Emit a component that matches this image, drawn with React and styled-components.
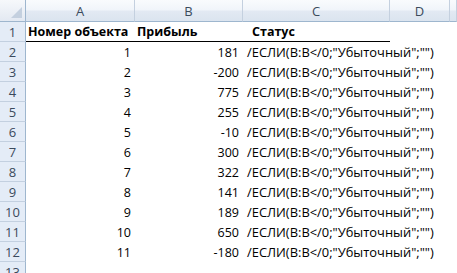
import styled, { createGlobalStyle } from "styled-components";

const GlobalStyle = createGlobalStyle`
  html, body {
    margin: 0;
    padding: 0;
    background: #ffffff;
  }
  body {
    font-family: "Open Sans", "Liberation Sans", sans-serif;
    overflow: hidden;
  }
`;

const columns = [
  { key: "A", width: 109 },
  { key: "B", width: 108 },
  { key: "C", width: 147 },
  { key: "D", width: 60 },
];

const rows = [
  [1, 181],
  [2, -200],
  [3, 775],
  [4, 255],
  [5, -10],
  [6, 300],
  [7, 322],
  [8, 141],
  [9, 189],
  [10, 650],
  [11, -180],
];

const formula = '/ЕСЛИ(B:B</0;"Убыточный";"")';

const Sheet = styled.div`
  display: grid;
  grid-template-columns: 26px ${columns.map((c) => `${c.width}px`).join(" ")} 1fr;
  grid-auto-rows: 20px;
  grid-template-rows: 22px;
  width: 457px;
  height: 273px;
  overflow: hidden;
  font-size: 12.5px;
  color: #000;
`;

const Corner = styled.div`
  position: relative;
  background: linear-gradient(#f6f8fb, #e3e9f2);
  border-right: 1px solid #9eb6ce;
  border-bottom: 1px solid #9eb6ce;

  &::after {
    content: "";
    position: absolute;
    right: 3px;
    bottom: 3px;
    width: 0;
    height: 0;
    border-left: 11px solid transparent;
    border-bottom: 11px solid #c4d0df;
  }
`;

const ColHead = styled.div`
  display: flex;
  align-items: center;
  justify-content: center;
  background: linear-gradient(#f9fbfd 0%, #f1f5fa 45%, #e2e9f3 55%, #dbe4ef 100%);
  border-right: 1px solid #c4d0df;
  border-bottom: 1px solid #9eb6ce;
  color: #3b4a5c;
  font-size: 13px;
`;

const RowHead = styled.div`
  display: flex;
  align-items: center;
  justify-content: center;
  background: #e4ecf7;
  border-right: 1px solid #9eb6ce;
  border-bottom: 1px solid #c3d0e0;
  color: #3b4a5c;
  font-size: 13px;
  padding-top: 1px;
  box-sizing: border-box;
`;

const Cell = styled.div`
  display: flex;
  align-items: center;
  justify-content: ${(p) => (p.$right ? "flex-end" : "flex-start")};
  padding: 0 ${(p) => (p.$right ? "4px" : "0")} 0 ${(p) => p.$indent || 2}px;
  font-weight: ${(p) => (p.$bold ? 700 : 400)};
  font-size: ${(p) => (p.$wide ? "12.9px" : "inherit")};
  border-bottom: ${(p) => (p.$underline ? "1px solid #000" : "none")};
  white-space: nowrap;
  overflow: visible;
  box-sizing: border-box;
  min-width: 0;
`;

export default function App() {
  return (
    <>
      <GlobalStyle />
      <Sheet>
        <Corner />
        {columns.map((c) => (
          <ColHead key={c.key}>{c.key}</ColHead>
        ))}
        <ColHead />

        <RowHead>1</RowHead>
        <Cell $bold $underline>Номер объекта</Cell>
        <Cell $bold $underline>Прибыль</Cell>
        <Cell $bold $underline $indent={9}>Статус</Cell>
        <Cell />
        <Cell />

        {rows.map(([n, profit], i) => (
          <RowLine key={n} index={i + 2} n={n} profit={profit} />
        ))}

        <RowHead>13</RowHead>
        <Cell />
        <Cell />
        <Cell />
        <Cell />
        <Cell />
      </Sheet>
    </>
  );
}

function RowLine({ index, n, profit }) {
  return (
    <>
      <RowHead>{index}</RowHead>
      <Cell $right>{n}</Cell>
      <Cell $right>{profit}</Cell>
      <Cell $wide $indent={4}>{formula}</Cell>
      <Cell />
      <Cell />
    </>
  );
}
